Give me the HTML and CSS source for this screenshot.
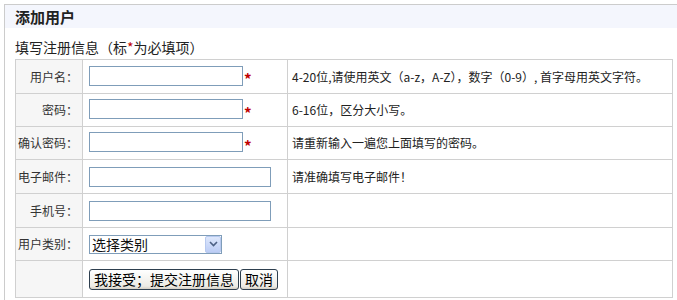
FILE: index.html
```html
<!DOCTYPE html>
<html lang="zh-CN">
<head>
<meta charset="utf-8">
<title>添加用户</title>
<link rel="stylesheet" href="styles.css">
</head>
<body>
<div class="box">
  <div class="box-head"><h2 class="box-title">添加用户</h2></div>
  <div class="box-body">
    <p class="intro">填写注册信息（标<span class="req">*</span>为必填项）</p>
    <table class="form">
      <colgroup><col class="c-label"><col class="c-field"><col class="c-hint"></colgroup>
      <tr class="tall">
        <th>用户名：</th>
        <td><input class="txt" type="text"><span class="req">*</span></td>
        <td class="hint">4-20位,请使用英文（a-z，A-Z），数字（0-9）, 首字母用英文字符。</td>
      </tr>
      <tr>
        <th>密码：</th>
        <td><input class="txt" type="password"><span class="req">*</span></td>
        <td class="hint">6-16位，区分大小写。</td>
      </tr>
      <tr>
        <th>确认密码：</th>
        <td><input class="txt" type="password"><span class="req">*</span></td>
        <td class="hint">请重新输入一遍您上面填写的密码。</td>
      </tr>
      <tr class="tall">
        <th>电子邮件：</th>
        <td><input class="txt wide" type="text"></td>
        <td class="hint">请准确填写电子邮件！</td>
      </tr>
      <tr class="tall">
        <th>手机号：</th>
        <td><input class="txt wide" type="text"></td>
        <td class="hint"></td>
      </tr>
      <tr>
        <th>用户类别：</th>
        <td>
          <span class="sel">
            <select class="sel-input"><option>选择类别</option></select>
            <span class="sel-btn"><svg width="9" height="6" viewBox="0 0 9 6"><path d="M1 1 L4.5 4.5 L8 1" fill="none" stroke="#4d6185" stroke-width="1.6"/></svg></span>
          </span>
        </td>
        <td class="hint"></td>
      </tr>
      <tr class="last">
        <th></th>
        <td><span class="btns"><button class="btn" type="button">我接受；提交注册信息</button><button class="btn" type="button">取消</button></span></td>
        <td class="hint"></td>
      </tr>
    </table>
  </div>
</div>
</body>
</html>
```
FILE: styles.css
```css
html, body {
  margin: 0;
  padding: 0;
  background: #fff;
  overflow: hidden;
}
body {
  font-family: "Noto Sans CJK SC", "DejaVu Sans", sans-serif;
  color: #333;
  font-size: 12px;
}
.box {
  box-sizing: border-box;
  margin: 4px 0 0 4px;
  border: 1px solid #cccccc;
  border-right: none;
  border-bottom: none;
  height: 296px;
}
.box-head {
  height: 23px;
  background: #f4f6fd;
  padding-left: 10px;
}
.box-title {
  margin: 0;
  font-size: 15px;
  font-weight: bold;
  line-height: 24px;
  color: #222;
}
.box-body {
  padding: 10px 0 0 10px;
}
.intro {
  margin: 0 0 3px;
  font-size: 14px;
  line-height: 18px;
  color: #222;
}
.req {
  color: #c00000;
  font-size: 12px;
}
.intro .req {
  font-size: 14px;
}
.form {
  border-collapse: collapse;
  width: 658px;
  table-layout: fixed;
}
.c-label { width: 67px; }
.c-field { width: 205px; }
.form th, .form td {
  border: 1px solid #d0d0d0;
  height: 32px;
  padding: 0;
  vertical-align: middle;
  line-height: 16px;
}
.form tr.tall th, .form tr.tall td {
  height: 33px;
}
.form tr.last th, .form tr.last td {
  height: 36px;
}
.form th {
  background: #f6f6f6;
  font-weight: normal;
  text-align: right;
  padding-right: 4px;
  color: #333;
}
.form td {
  padding-left: 6px;
}
.form td.hint {
  padding-left: 4px;
  color: #222;
}
.txt {
  box-sizing: border-box;
  width: 154px;
  height: 20px;
  border: 1px solid #7f9db9;
  margin: 0;
  padding: 0 2px;
  vertical-align: middle;
  background: #fff;
  font-size: 12px;
}
.txt.wide {
  width: 182px;
}
.txt + .req {
  font-size: 15px;
  font-weight: bold;
  vertical-align: -6px;
  margin-left: 1px;
}
.sel {
  position: relative;
  display: inline-block;
  width: 133px;
  height: 19px;
  vertical-align: middle;
}
.sel-input {
  appearance: none;
  -webkit-appearance: none;
  box-sizing: border-box;
  width: 133px;
  height: 19px;
  border: 1px solid #7f9db9;
  border-radius: 0;
  background: #fff;
  margin: 0;
  padding: 0 2px;
  font-family: "Noto Sans CJK SC", sans-serif;
  font-size: 14px;
  line-height: 17px;
  color: #111;
}
.sel-btn {
  position: absolute;
  right: 1px;
  top: 1px;
  box-sizing: border-box;
  width: 16px;
  height: 17px;
  border: 1px solid #b7c9ef;
  border-radius: 2px;
  background: linear-gradient(#dde7fc, #bccdf5);
  display: flex;
  align-items: center;
  justify-content: center;
}
.btns {
  display: inline-flex;
  gap: 1px;
  vertical-align: middle;
}
.btn {
  height: 21px;
  margin: 0;
  padding: 0 4px;
  border: 1px solid #2e3f4f;
  border-radius: 3px;
  background: linear-gradient(#ffffff, #ecebe5 85%, #d6d0c5);
  font-family: "Noto Sans CJK SC", sans-serif;
  font-size: 14px;
  line-height: 19px;
  color: #000;
}
```
